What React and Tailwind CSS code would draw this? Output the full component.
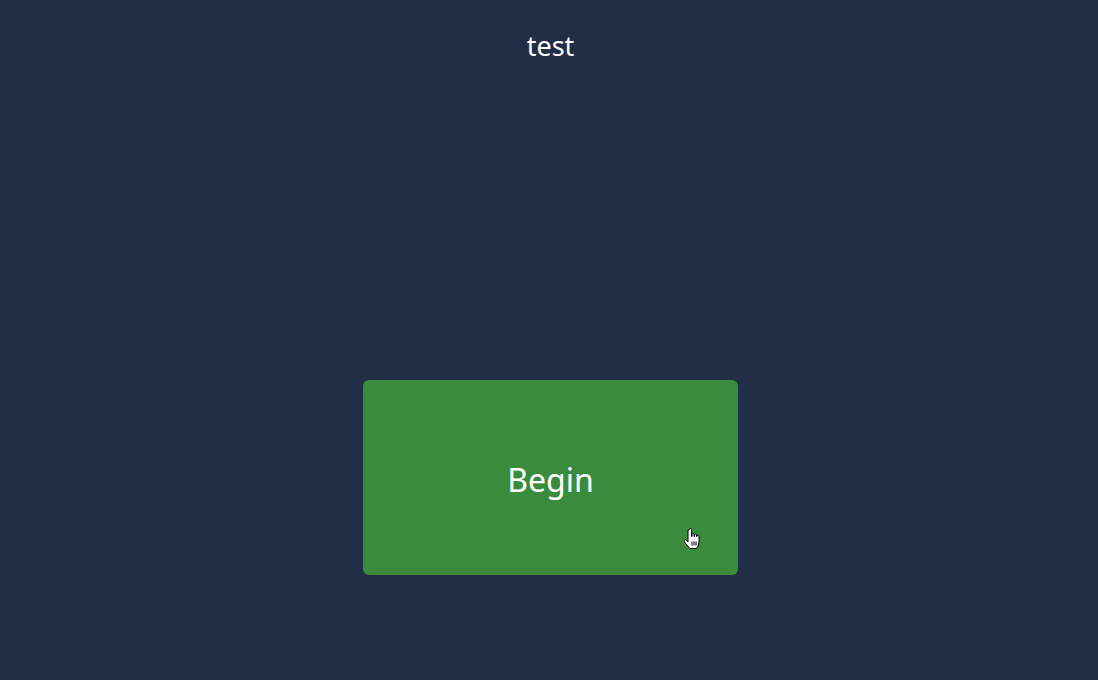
import React from 'react';

const HandCursor = () => (
  <svg width="17" height="23" viewBox="0 0 17 23" className="absolute right-[37px] bottom-[24px]">
    <path
      d="M5.5 1.5c0-0.8 0.5-1 1-1s1 0.2 1 1v7h0.5v-2c0-0.7 0.5-1 1-1s1 0.3 1 1v2h0.5v-1.5c0-0.7 0.5-1 1-1s1 0.3 1 1v1.5h0.5v-0.5c0-0.7 0.5-1 1-1s1 0.3 1 1v6c0 3-1.5 5.5-3 6.5h-6c-1-1-4.5-5-5.5-6.5c-0.5-0.8-0.3-1.6 0.3-2s1.3-0.2 1.8 0.5l1.4 1.5v-12z"
      fill="#ffffff"
      stroke="#000000"
      strokeWidth="1"
      strokeLinejoin="round"
    />
    <path d="M8 13.5v4M10 13.5v4M12 13.5v4" stroke="#000000" strokeWidth="1" />
  </svg>
);

export default function App() {
  return (
    <div
      className="min-h-[680px] w-full bg-[#222e46] text-white flex flex-col items-center"
      style={{ fontFamily: '"Noto Sans", "Open Sans", sans-serif' }}
    >
      <h1 className="mt-[27px] ml-[3px] text-[27px] leading-[38px] font-normal">test</h1>

      <button
        type="button"
        className="relative mt-[315px] ml-[3px] w-[375px] h-[195px] rounded-[6px] bg-[#3a8c3c] text-white text-[32px] pt-[4px] flex items-center justify-center"
      >
        Begin
        <HandCursor />
      </button>
    </div>
  );
}
